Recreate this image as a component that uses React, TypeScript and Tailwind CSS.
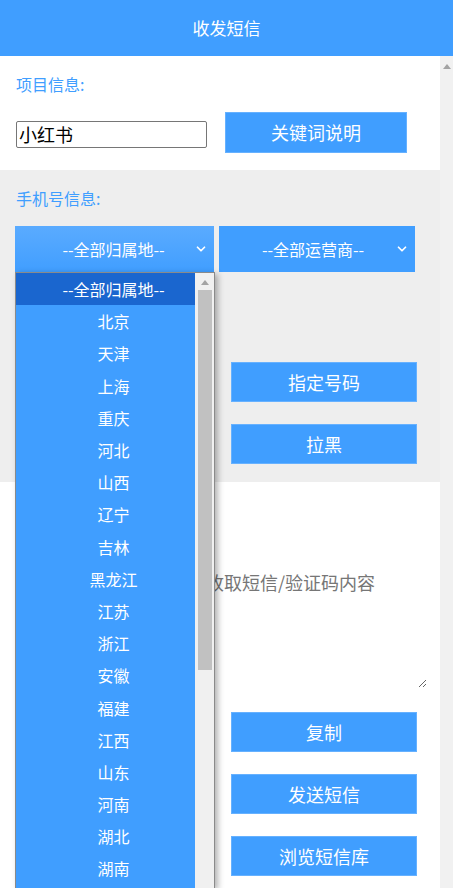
import { ChevronDown } from "lucide-react"

const provinces = [
    "--全部归属地--", "北京", "天津", "上海", "重庆", "河北", "山西", "辽宁", "吉林", "黑龙江",
    "江苏", "浙江", "安徽", "福建", "江西", "山东", "河南", "湖北", "湖南",
]

const BlueButton = ({ label }: { label: string }) => (
    <button className="w-[186px] h-[40px] bg-[#409eff] text-white text-[18px] border border-[#66b1ff]">
        {label}
    </button>
)

const ScrollArrow = () => (
    <div className="w-0 h-0 border-l-[4px] border-r-[4px] border-b-[5px] border-l-transparent border-r-transparent border-b-[#a3a3a3]" />
)

export default function App() {
    return (
        <div className="h-screen overflow-hidden bg-white font-['Noto_Sans_CJK_SC',sans-serif] relative">
            <header className="h-[56px] bg-[#409eff] text-white text-[17px] flex items-center justify-center">
                收发短信
            </header>
            <div className="flex">
                <main className="w-[440px]">
                    {/* project info */}
                    <section className="bg-white px-[16px] pt-[18px] pb-[17px]">
                        <div className="text-[16px] leading-[20px] text-[#409eff]">项目信息:</div>
                        <div className="flex items-start mt-[18px]">
                            <input
                                defaultValue="小红书"
                                className="mt-[9px] w-[191px] h-[27px] border border-[#767676] rounded-[2px] px-[2px] text-[18px] text-black outline-none"
                            />
                            <button className="ml-[18px] w-[182px] h-[41px] bg-[#409eff] text-white text-[18px] border border-[#66b1ff]">
                                关键词说明
                            </button>
                        </div>
                    </section>
                    {/* phone info */}
                    <section className="bg-[#eeeeee] px-[15px] pt-[18px] pb-[18px]">
                        <div className="pl-[1px] text-[16px] leading-[20px] text-[#409eff]">手机号信息:</div>
                        <div className="flex gap-[5px] mt-[18px]">
                            <div className="w-[199px] h-[46px] bg-linear-to-b from-[#5aabff] to-[#409eff] text-white text-[16px] flex items-center relative">
                                <span className="flex-1 text-center pr-[2px]">--全部归属地--</span>
                                <ChevronDown className="absolute right-[6px]" size={14} strokeWidth={3} />
                            </div>
                            <div className="w-[196px] h-[46px] bg-[#409eff] text-white text-[16px] flex items-center relative">
                                <span className="flex-1 text-center pr-[8px]">--全部运营商--</span>
                                <ChevronDown className="absolute right-[6px]" size={14} strokeWidth={3} />
                            </div>
                        </div>
                        <div className="flex mt-[90px]">
                            <div className="w-[216px]">
                                <input readOnly placeholder="手机号码" className="w-[190px] h-[40px] bg-white px-2 text-[16px]" />
                            </div>
                            <div className="flex flex-col gap-[22px]">
                                <BlueButton label="指定号码" />
                                <BlueButton label="拉黑" />
                            </div>
                        </div>
                    </section>
                    {/* message content */}
                    <section className="bg-white px-[16px] pt-[18px] pb-[20px]">
                        <textarea
                            placeholder="获取号码后此处会显示收取短信/验证码内容"
                            className="block w-[411px] h-[188px] pt-[70px] pl-[10px] pr-[4px] text-[18px] leading-[24px] placeholder:text-[#767676] outline-none resize-y"
                        />
                        <div className="flex flex-col gap-[22px] mt-[24px] ml-[215px]">
                            <BlueButton label="复制" />
                            <BlueButton label="发送短信" />
                            <BlueButton label="浏览短信库" />
                        </div>
                    </section>
                </main>
                <div className="w-[13px] bg-[#f1f1f1] flex justify-center pt-[8px]">
                    <ScrollArrow />
                </div>
            </div>

            {/* opened region list */}
            <div className="absolute left-[15px] top-[272px] w-[200px] h-[616px] border border-[#8a8a8a] border-b-0 bg-[#f0f0f0] flex shadow-[3px_2px_6px_rgba(0,0,0,0.3)]">
                <ul className="w-[179px] bg-[#409eff] text-white text-[16px]">
                    {provinces.map((p, i) => (
                        <li
                            key={p}
                            className={`h-[32.2px] pl-[16px] flex items-center justify-center ${i === 0 ? "bg-[#1a66cf]" : ""}`}
                        >
                            {p}
                        </li>
                    ))}
                </ul>
                <div className="flex-1 flex flex-col items-center pt-[7px]">
                    <ScrollArrow />
                    <div className="mt-[5px] w-[14px] h-[380px] bg-[#c1c1c1]" />
                </div>
            </div>
        </div>
    )
}
